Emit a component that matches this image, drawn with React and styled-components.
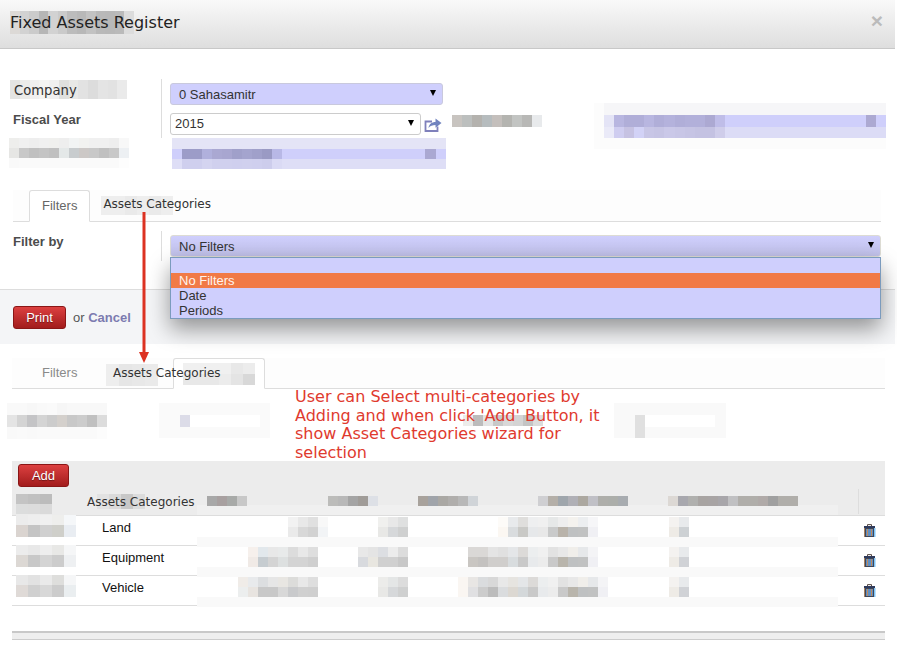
import React from 'react'
import styled, { createGlobalStyle } from 'styled-components'

const GlobalStyle = createGlobalStyle`
  html, body { margin: 0; padding: 0; background: #fff; }
`

const Page = styled.div`
  position: relative;
  width: 897px;
  height: 653px;
  overflow: hidden;
  background: #fff;
  font-family: "Liberation Sans", Arial, sans-serif;
  font-size: 13px;
  color: #333;
`

/* pixelated smudges that sit behind the text of a section */
const Patch = styled.div.attrs(p => ({ style: { left: p.$x, top: p.$y } }))`
  position: absolute;
  z-index: -1;
  display: flex;
  flex-direction: column;
`
const TileRow = styled.div`
  display: flex;
`
const Tile = styled.i.attrs(p => ({
  style: { width: p.$w, height: p.$h, background: p.$tone },
}))`
  display: block;
  flex: none;
`

const Patches = ({ list, dx = 0, dy = 0 }) =>
  list.map((p, i) => (
    <Patch key={i} $x={p.x - dx} $y={p.y - dy}>
      {p.rows.map((row, r) => (
        <TileRow key={r}>
          {row.map((tone, t) => (
            <Tile key={t} $tone={tone} $w={p.w || 10} $h={p.hs ? p.hs[r] : p.h || 10} />
          ))}
        </TileRow>
      ))}
    </Patch>
  ))

const Header = styled.header`
  position: relative;
  isolation: isolate;
  width: 895px;
  height: 49px;
  box-sizing: border-box;
  padding: 13px 0 0 10px;
  background: linear-gradient(#f9f9f9, #dedede);
  border-bottom: 1px solid #c8c8c8;
  display: flex;
  justify-content: space-between;
`
const Title = styled.h1`
  margin: 0;
  font: 400 16px/20px "DejaVu Sans", sans-serif;
  color: #222;
`
const Close = styled.span`
  font: 700 21px/20px "Liberation Sans", sans-serif;
  color: #bbb;
  margin: -2px 12px 0 0;
`

const FormArea = styled.section`
  position: relative;
  z-index: 2;
  isolation: isolate;
  width: 895px;
  height: 240px;
  box-sizing: border-box;
  padding-top: 30px;
`
const FieldRow = styled.div`
  display: grid;
  grid-template-columns: 148px 1fr;
  margin: ${p => p.$top || 0}px 0 0 13px;
  width: 868px;
  height: ${p => p.$height}px;
`
const FieldLabels = styled.div`
  display: flex;
  flex-direction: column;
  gap: 10px;
  padding-top: ${p => p.$top || 0}px;
`
const PlainLabel = styled.span`
  font: 400 13.2px/20px "DejaVu Sans", sans-serif;
  color: #333;
  margin-left: 1px;
`
const BoldLabel = styled.label`
  font-weight: 700;
  font-size: 13px;
  line-height: 18px;
  color: #4c4c4c;
`
const FieldControls = styled.div`
  position: relative;
  border-left: 1px solid #ddd;
  padding: 4px 0 0 8px;
  display: flex;
  flex-direction: column;
  gap: 8px;
`
const SelectBox = styled.div`
  position: relative;
  box-sizing: border-box;
  height: 22px;
  width: ${p => p.$width || '100%'};
  padding: 0 0 0 ${p => p.$pad || 8}px;
  font-size: 13px;
  line-height: ${p => p.$line || 22}px;
  color: #333;
  border: 1px solid ${p => p.$border || '#c9c9dd'};
  border-radius: 3px;
  background: ${p => p.$bg || '#cfcffd'};
  &::after {
    content: "";
    position: absolute;
    right: 6px;
    top: 6px;
    border: 3px solid transparent;
    border-width: 6px 3.5px 0;
    border-top-color: #000;
  }
`
const InlineControl = styled.div`
  display: flex;
  align-items: center;
  gap: 3px;
`
const ShareIcon = styled.svg`
  width: 18px;
  height: 15px;
  flex: none;
`
const TabStrip = styled.div`
  position: relative;
  display: flex;
  box-sizing: border-box;
  margin-left: ${p => p.$left}px;
  width: ${p => p.$width}px;
  height: ${p => p.$height}px;
  border-bottom: 1px solid #ddd;
  background: #fdfdfd;
  margin-top: ${p => p.$top}px;
  padding-left: ${p => p.$pad}px;
  isolation: isolate;
`
const Tab = styled.div`
  box-sizing: border-box;
  height: calc(100% + 1px);
  padding: 0 12px;
  line-height: 30px;
  font-size: 13px;
  color: #666;
  background: ${p => (p.$active ? '#fff' : 'transparent')};
  border: 1px solid ${p => (p.$active ? '#ddd' : 'transparent')};
  border-bottom-color: ${p => (p.$active ? '#fff' : 'transparent')};
  border-radius: 3px 3px 0 0;
`
const TabText = styled.span`
  font: 400 12px/28px "DejaVu Sans", sans-serif;
  color: #333;
  margin-left: 13px;
`
const GhostTab = styled(Tab)`
  color: #8a8a8a;
  width: 161px;
  flex: none;
  padding-left: 30px;
  border: 0;
  line-height: 29px;
`
const EmptyTab = styled(Tab)`
  position: relative;
  isolation: isolate;
  width: 92px;
  flex: none;
`
const FloatingTabText = styled(TabText)`
  position: absolute;
  left: 101px;
  top: 0;
  margin: 0;
  line-height: 30px;
`
const Dropdown = styled.ul`
  position: absolute;
  left: 8px;
  right: 0;
  top: 26px;
  z-index: 3;
  margin: 0;
  padding: 15px 0 0;
  list-style: none;
  background: #cfcffd;
  border: 1px solid #7b9bbd;
  box-shadow: 0 10px 22px rgba(0, 0, 0, 0.4);
`
const Option = styled.li`
  height: 15px;
  line-height: 15px;
  padding-left: 8px;
  font-size: 13px;
  color: ${p => (p.$current ? '#fff4ec' : '#333')};
  background: ${p => (p.$current ? '#f17a46' : 'transparent')};
`

const Footer = styled.footer`
  width: 895px;
  height: 55px;
  box-sizing: border-box;
  border-top: 1px solid #ddd;
  background: #f4f5f7;
  padding: 16px 0 0 13px;
  display: flex;
  align-items: flex-start;
  gap: 7px;
`
const RedButton = styled.button`
  box-sizing: border-box;
  width: ${p => p.$width}px;
  height: 23px;
  padding: 0;
  font: 400 13px/21px "Liberation Sans", sans-serif;
  color: #fff;
  text-shadow: 0 1px 1px rgba(0, 0, 0, 0.4);
  border: 1px solid #8a1616;
  border-radius: 3px;
  background: linear-gradient(#dc4040, #a21c1c);
`
const FooterText = styled.span`
  line-height: 23px;
  color: #555;
`
const CancelLink = styled.a`
  font-weight: 700;
  color: #7c7bb0;
`

const Lower = styled.section`
  position: relative;
  isolation: isolate;
  padding-top: 14px;
`
const Note = styled.p`
  margin: -1px 0 0 295px;
  height: 73px;
  font: 400 16px/18.7px "DejaVu Sans", sans-serif;
  color: #e03a2e;
  white-space: nowrap;
`
const Table = styled.div`
  margin-left: 12px;
  width: 873px;
`
const Toolbar = styled.div`
  height: 28px;
  box-sizing: border-box;
  padding: 3px 0 0 6px;
  background: #ececec;
`
const Row = styled.div`
  display: grid;
  grid-template-columns: 63px 122px 641px 47px;
  box-sizing: border-box;
  height: ${p => p.$height || 30}px;
  border-bottom: 1px solid ${p => p.$line || '#ddd'};
  background: ${p => p.$bg || 'transparent'};
`
const Cell = styled.div`
  position: relative;
  isolation: isolate;
`
const HeadName = styled(Cell)`
  font: 400 12px/26px "DejaVu Sans", sans-serif;
  color: #333;
  padding-left: 12px;
  white-space: nowrap;
`
const BodyName = styled(Cell)`
  line-height: 23px;
  color: #111;
  padding-left: 27px;
`
const WideCell = styled(Cell)`
  align-self: start;
  height: 30px;
  margin-top: 1px;
  background: linear-gradient(#fff 20px, #f9f9f9 20px);
`
const HeadBand = styled(Cell)`
  align-self: stretch;
  background: linear-gradient(#ececec 16px, #f0f0f0 16px);
`
const ActionHead = styled(Cell)`
  &::before {
    content: "";
    position: absolute;
    left: 20px;
    top: 0;
    bottom: 1px;
    border-left: 1px solid #ddd;
  }
`
const ActionCell = styled(Cell)`
  padding: 8px 0 0 26px;
`
const TrashIcon = styled.svg`
  display: block;
  width: 12px;
  height: 13px;
`
const EndBar = styled.div`
  margin: 25px 0 0 12px;
  width: 873px;
  height: 9px;
  box-sizing: border-box;
  border-top: 2px solid #c8c8c8;
  border-bottom: 1px solid #ccc;
  background: #eee;
`
const ArrowLayer = styled.svg`
  position: absolute;
  left: 136px;
  top: 210px;
  z-index: 5;
  width: 16px;
  height: 154px;
`

const headerPatches = [
  {
    x: 10, y: 11, w: 9.5, h: 23,
    rows: [['#dcd9d6', '#d2d2d2', '#cbcbcb', '#b6b6b6', '#d2d2d2', '#cacaca', '#bcbcbc', '#b8b8b8', '#c2c2c2', '#b9b9b9', '#b8b8b8', '#bababa', '#dcdcdc']],
  },
]

const v = '#cfcffb'
const formPatches = [
  {
    x: 10, y: 80, w: 9.75, h: 19,
    rows: [['#e4e4e2', '#ececea', '#f0f0f0', '#f4f4f2', '#f0f0f0', '#e0e0de', '#e8e8e6', '#e2e2e2', '#dcdcdc', '#e4e4e4', '#e2e2e2', '#eaeaea']],
  },
  {
    x: 9, y: 138,
    rows: [
      ['#eeeeec', '#f0f0f0', '#eeeeee', '#f0f0f0', '#f0f0ee', '#eeeeee', '#f2f4f4', '#f2f2f0', '#f0f0f0', '#f0f0f0', '#eeeeee', '#f8f8f8'],
      ['#e6e6e4', '#c8c8c8', '#c0c0c0', '#c4c4c4', '#c0c0c0', '#e4e8e8', '#c8ccce', '#ccc8c6', '#c8c8c8', '#c0c0c0', '#c8c8c8', '#edf0f3'],
      ['#f9f9f9', '#fafafa', '#fafafa', '#fafafa', '#fafafa', '#fafafa', '#fafafa', '#fafafa', '#fafafa', '#fafafa', '#fafafa', '#fdfdfd'],
    ],
  },
  {
    x: 172, y: 138, w: 274, hs: [11, 10, 10],
    rows: [['#e4e4f6'], [v], ['#dedef6']],
  },
  {
    x: 182, y: 149,
    rows: [['#9c9cc8', '#9c9cc8', '#b0b0dc', '#aaa8d2', '#a8a6d0', '#a0a0ca', '#a4a4ce', '#a0a0ca', '#9a9ac4', '#b8b8e6']],
  },
  {
    x: 182, y: 159,
    rows: [['#cfcfee', '#cfcfee', '#d4d4f0', '#d0d0ee', '#d0d0ee', '#cfcfee', '#d0d0ee', '#cfcfee', '#cdcdec', '#dadaf4']],
  },
  { x: 425, y: 149, w: 11, rows: [['#aaa8d2']] },
  {
    x: 452, y: 115, h: 12,
    rows: [['#c8c4c0', '#bcbfbe', '#b4b2ae', '#b6bcbe', '#c4bfbc', '#b4b4b0', '#c2c4c2', '#b8b8b6', '#e8eaec']],
  },
  {
    x: 594, y: 103, w: 292, h: 46,
    rows: [['#fcfcfc']],
  },
  {
    x: 604, y: 103, w: 282, hs: [12, 12, 11],
    rows: [['#f6f6f8'], [v], ['#dcdcf6']],
  },
  { x: 604, y: 115, w: 10, hs: [12, 11], rows: [['#e4e4f6'], ['#eaeaf8']] },
  {
    x: 614, y: 115, w: 10.1, hs: [12, 11],
    rows: [
      ['#b8b6e0', '#b0aed8', '#b0aed8', '#b8b6e0', '#b0aed8', '#b4b2dc', '#b0aed8', '#b2b0da', '#b2b0da', '#aca9d2', '#bfbde8'],
      ['#cfcdf0', '#c6c2e2', '#d2d2f6', '#c8c6e6', '#c6c4e4', '#cac8e8', '#c8c6e6', '#c6c4e4', '#c4c2e2', '#c4c2e2', '#cfcdea'],
    ],
  },
  { x: 866, y: 115, h: 12, rows: [['#aca9d2']] },
]

const upperTabPatches = [
  {
    x: 88, y: 6, h: 19, w: 12,
    rows: [['#eeeeee', '#eeeeee', '#eaeaea', '#eeeeee', '#eaeaea', '#eeeeee']],
  },
]

const lowerTabPatch = [
  {
    x: 94, y: 6, h: 22, w: 13,
    rows: [['#eeeeee', '#e6e6e6', '#e8e8e8', '#eaeaea']],
  },
]

const activeTabPatch = [
  {
    x: 9, y: 4, h: 11, w: 12,
    rows: [
      ['#f0f0f0', '#f0f0f0', '#f0f0f0', '#f0f0f0', '#e8e8e8', '#ececec'],
      ['#e8e8e8', '#e8e8e8', '#e8e8e8', '#ececec', '#e4e4e4', '#d8d8d8'],
    ],
  },
]

const lowerPatches = [
  {
    x: 7, y: 403, h: 12,
    rows: [
      ['#f9f9f9', '#f9f9f9', '#f7f7f7', '#f9f9f9', '#fafafa', '#f6f6f6', '#f8f8f8', '#f8f8f8', '#f8f8f8', '#f8f8f8'],
      ['#e4e4e4', '#d4d4d4', '#c4c4c6', '#d4d4d4', '#cccccc', '#d4d0cc', '#c8c8c8', '#cccccc', '#c0c0c0', '#dcdcdc'],
      ['#f9f9f9', '#fafafa', '#f9f9f9', '#fafafa', '#fafafa', '#fafafa', '#fafafa', '#fafafa', '#fafafa', '#fcfcfc'],
    ],
  },
  {
    x: 159, y: 403, w: 111, h: 35,
    rows: [['#fafafa']],
  },
  { x: 180, y: 415, w: 80, h: 12, rows: [['#ffffff']] },
  { x: 180, y: 415, w: 10, h: 12, rows: [['#dcdce8']] },
  {
    x: 463, y: 415, h: 11,
    rows: [['#ececea', '#bcbcbc', '#e4e4e4', '#c8c8c8', '#d8d8d8', '#d4d4d4', '#c4c4c4', '#dcdcdc']],
  },
  {
    x: 614, y: 403, w: 112, h: 35,
    rows: [['#f9f9f9']],
  },
  { x: 635, y: 415, w: 80, h: 12, rows: [['#ffffff']] },
  { x: 635, y: 415, w: 10, h: 23, rows: [['#e0e0e0']] },
]

const idRows = [
  [['#ececec', '#eeeeee', '#f0f0f0', '#eeeeec', '#f5f7f9'], ['#dad4d0', '#c4c4c4', '#d0d0d0', '#cfcfca', '#e9edf2']],
  [['#ececec', '#e8e8e8', '#eeeeee', '#e8e8e6', '#f5f6f7'], ['#dcd8d4', '#c8c8c8', '#d4d4d4', '#cccccc', '#eef0f2']],
  [['#e8e8e8', '#e2e2e2', '#eaeaea', '#dededc', '#f5f6f7'], ['#dfdad7', '#d0d0d0', '#d8d8d8', '#cccccc', '#eaeef0']],
]

const rowData = [
  {
    name: 'Land',
    patches: [
      { x: 91, y: 0, rows: [['#f2f2f2', '#e8e8e8', '#e0e0e0', '#f8f8f8'], ['#eaeaea', '#d8d8d8', '#d2d2d2', '#f2f4f6']] },
      { x: 181, y: 0, rows: [['#f0f0ee', '#e8e8e8', '#dfe0e0'], ['#e8e8e6', '#d6d8da', '#cfd0d0']] },
      { x: 301, y: 0, rows: [['#fdfbf8', '#e8eaec', '#dfdedc', '#eeeff0', '#f0f0f0', '#e6e8e8', '#eeeeee', '#f4f2ee', '#eceef0', '#f6f6f8'], ['#fbf7f2', '#d9dcde', '#c9c9c6', '#e6e8ea', '#e8e8e8', '#c9caca', '#b9b3aa', '#bfc1c2', '#c1c2c2', '#f0f0f4']] },
      { x: 472, y: 0, rows: [['#f4f2f0', '#e8eaec'], ['#eeebe6', '#cdd1d4']] },
    ],
  },
  {
    name: 'Equipment',
    patches: [
      { x: 51, y: 0, rows: [['#f6f0ec', '#e2e8ec', '#e8e8e8', '#e8eaea', '#dcdcdc', '#e8e8e8', '#dedede'], ['#f0eae6', '#c6ccd0', '#d4d4d4', '#dde0e0', '#d4d4d4', '#d4d4d4', '#cfcfcf']] },
      { x: 161, y: 0, rows: [['#e8e8e8', '#e4e4e4', '#dcdee2', '#ececec', '#dcdcdc'], ['#d8dade', '#e8e6e0', '#d0d0d0', '#d0d0d0', '#c8c8c8']] },
      { x: 271, y: 0, rows: [['#dad8d6', '#dad8d6', '#e4e4e4', '#e0e0e0', '#e4e6e8', '#dcdad8', '#eceeef', '#f0f0f0', '#e2e2e2', '#e8e8e8', '#f0eeea', '#e6e8ea', '#f4f4f6'], ['#c9c6c2', '#c4c2c0', '#d0cecc', '#d0cecc', '#d8dcde', '#c9c9c9', '#e8eaec', '#ececec', '#c9c9c9', '#b9b5ac', '#bfc1c2', '#c1c2c2', '#f0f0f4']] },
      { x: 472, y: 0, rows: [['#f4f2f0', '#e8eaec'], ['#eeebe6', '#d0d2d6']] },
    ],
  },
  {
    name: 'Vehicle',
    patches: [
      { x: 41, y: 0, rows: [['#f0ece8', '#e8eaec', '#dcdee0', '#e6e6e6', '#e8e6e2', '#dcdcda', '#e8e8e8', '#dedede'], ['#eceeee', '#e8e4e0', '#c8c8c8', '#c8c8c8', '#d8d8d8', '#c9cacc', '#d0d0d0', '#cfcfcf']] },
      { x: 181, y: 0, rows: [['#ececea', '#e4e6e6', '#dcdcdc'], ['#e8e8e6', '#d6d8da', '#cfd0d0']] },
      { x: 261, y: 0, rows: [['#faf6f2', '#e8e6e4', '#dadcde', '#d8d8d8', '#e8e8e8', '#e6e4e0', '#e4e6e8', '#dcdad8', '#eceeef', '#f0f0f0', '#e2e2e2', '#e8e8e8', '#f0eeea', '#e6e8ea', '#f4f4f6'], ['#faf6f2', '#e0e0e2', '#cccccc', '#bcbcbc', '#dadcde', '#dcd8d2', '#d4d8da', '#c9c9c9', '#e8eaec', '#ececec', '#c9c9c9', '#b9b5ac', '#bfc1c2', '#c1c2c2', '#f0f0f4']] },
      { x: 472, y: 0, rows: [['#f4f2f0', '#e8eaec'], ['#eeebe6', '#d0d2d6']] },
    ],
  },
]

const headPatches = [
  { x: 10, y: 7, rows: [['#a8a8a8', '#a8a0a0', '#a8aaa8', '#c8c8c8']] },
  { x: 131, y: 7, rows: [['#bcbcba', '#b8b8b8', '#a4a4a4', '#a09c98', '#dde0e6']] },
  { x: 221, y: 7, rows: [['#a8a29c', '#a0a4aa', '#aaa8a4', '#b0aeac', '#b8b8b8', '#d0d4d8']] },
  { x: 341, y: 7, rows: [['#cfcfd2', '#b4afa8', '#9fa6ac', '#b0b0b6', '#aca8a0', '#c0c0c6', '#aeaeaa', '#acaeaa', '#a8acb0']] },
  { x: 471, y: 7, rows: [['#dcd8d4', '#a8a8ae', '#b0b0ae', '#a8a4a2', '#a8a4a4', '#a8a6aa', '#c0c0c2', '#b0aeaa', '#b0aeaa', '#b0aaa8', '#a0a0a0', '#b0aeaa', '#b0aeaa']] },
]

const ShareGlyph = () => (
  <ShareIcon viewBox="0 0 18 15" aria-hidden="true">
    <path d="M8 4.500H1.500v9.500h12V9.500" fill="none" stroke="#7f80bb" strokeWidth="1.800" />
    <path d="M4.500 11c.6-4 3.400-6 7-6V1.500L17.500 6l-6 4.800V8c-3 0-5.200.8-7 3z" fill="#7183bf" />
  </ShareIcon>
)

const TrashGlyph = () => (
  <TrashIcon viewBox="0 0 12 13" aria-hidden="true">
    <path d="M3.500 2.500V.6h4v1.900" fill="none" stroke="#5a4a44" />
    <rect x="0" y="2" width="11" height="2" fill="#2f3a5c" />
    <rect x="0" y="4" width="1" height="9" fill="#a9825f" />
    <rect x="1.500" y="4.500" width="8" height="8" fill="#5f8fc4" stroke="#3f4658" />
    <path d="M3.500 5v7M7.500 5v7" stroke="#c08a5c" />
    <rect x="10" y="4" width="1.500" height="9" fill="#7fc4f5" />
  </TrashIcon>
)

export default function App() {
  return (
    <Page>
      <GlobalStyle />
      <Header>
        <Patches list={headerPatches} />
        <Title>Fixed Assets Register</Title>
        <Close>×</Close>
      </Header>

      <FormArea>
        <Patches list={formPatches} dy={49} />
        <FieldRow $height={59}>
          <FieldLabels $top={2}>
            <PlainLabel>Company</PlainLabel>
            <BoldLabel>Fiscal Year</BoldLabel>
          </FieldLabels>
          <FieldControls>
            <SelectBox $width="273px">0 Sahasamitr</SelectBox>
            <InlineControl>
              <SelectBox $width="251px" $bg="#fff" $border="#ccc" $pad={4} $line={20}>2015</SelectBox>
              <ShareGlyph />
            </InlineControl>
          </FieldControls>
        </FieldRow>

        <TabStrip $left={13} $width={868} $height={32} $top={52} $pad={16}>
          <Patches list={upperTabPatches} />
          <Tab $active>Filters</Tab>
          <TabText>Assets Categories</TabText>
        </TabStrip>

        <FieldRow $height={30} $top={9}>
          <FieldLabels $top={2}>
            <BoldLabel>Filter by</BoldLabel>
          </FieldLabels>
          <FieldControls>
            <SelectBox $bg="linear-gradient(#cfcffd, #c0c0e8)" $border="#dddcd4">No Filters</SelectBox>
            <Dropdown>
              <Option $current>No Filters</Option>
              <Option>Date</Option>
              <Option>Periods</Option>
            </Dropdown>
          </FieldControls>
        </FieldRow>
      </FormArea>

      <Footer>
        <RedButton $width={53}>Print</RedButton>
        <FooterText>
          or <CancelLink>Cancel</CancelLink>
        </FooterText>
      </Footer>

      <Lower>
        <Patches list={lowerPatches} dy={344} />
        <TabStrip $left={12} $width={873} $height={31} $top={0} $pad={0}>
          <Patches list={lowerTabPatch} />
          <GhostTab>Filters</GhostTab>
          <EmptyTab $active>
            <Patches list={activeTabPatch} />
          </EmptyTab>
          <FloatingTabText>Assets Categories</FloatingTabText>
        </TabStrip>
        <Note>
          User can Select multi-categories by
          <br />
          Adding and when click 'Add' Button, it
          <br />
          show Asset Categories wizard for
          <br />
          selection
        </Note>

        <Table>
          <Toolbar>
            <RedButton $width={51}>Add</RedButton>
          </Toolbar>
          <Row $height={27} $bg="#ececec" $line="#ddd">
            <Cell>
              <Patches
                list={[{ x: 4, y: 5, w: 12, rows: [['#c4c4c4', '#c0c0c0', '#bcbcbc'], ['#dcdddd', '#dcdcdc', '#dadada']] }]}
              />
            </Cell>
            <HeadName>
              <Patches
                list={[{ x: 22, y: 5, w: 12, h: 15, rows: [['#e2e2e2', '#dadada', '#c8c8c8', '#dcdcdc']] }]}
              />
              Assets Categories
            </HeadName>
            <HeadBand>
              <Patches list={headPatches} />
            </HeadBand>
            <ActionHead />
          </Row>
          {rowData.map((row, i) => (
            <Row key={row.name}>
              <Cell>
                <Patches list={[{ x: 4, y: -1, w: 12, hs: [10, 12], rows: idRows[i] }]} />
              </Cell>
              <BodyName>{row.name}</BodyName>
              <WideCell>
                <Patches list={row.patches} />
              </WideCell>
              <ActionCell>
                <TrashGlyph />
              </ActionCell>
            </Row>
          ))}
        </Table>
        <EndBar />
      </Lower>

      <ArrowLayer viewBox="0 0 16 154" aria-hidden="true">
        <path d="M6.500 2h3v143h-3z" fill="#dc3222" />
        <path d="M3 142h10l-5 11z" fill="#dc3222" />
      </ArrowLayer>
    </Page>
  )
}
